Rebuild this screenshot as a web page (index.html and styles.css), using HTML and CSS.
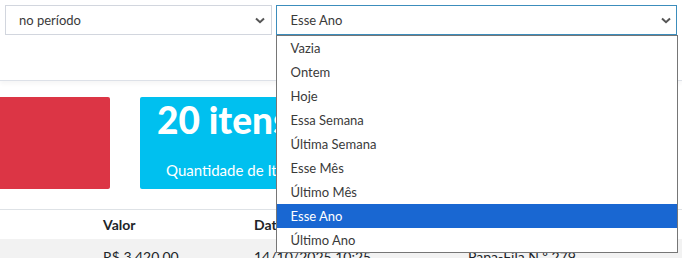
FILE: index.html
```html
<!DOCTYPE html>
<html lang="pt-BR">
<head>
  <meta charset="UTF-8" />
  <title>Relatório</title>
  <link rel="stylesheet" href="styles.css">
</head>
<body>
  <!-- Filtros -->
  <div class="filter-bar">
    <div class="select select-period">
      <span>no período</span>
      <svg class="chevron" width="10" height="7" viewBox="0 0 10 7"><path d="M1 1.5 L5 5.2 L9 1.5" fill="none" stroke="#555" stroke-width="2"/></svg>
    </div>
    <div class="select select-range is-open">
      <span>Esse Ano</span>
      <svg class="chevron" width="10" height="7" viewBox="0 0 10 7"><path d="M1 1.5 L5 5.2 L9 1.5" fill="none" stroke="#555" stroke-width="2"/></svg>
      <ul class="options">
        <li>Vazia</li>
        <li>Ontem</li>
        <li>Hoje</li>
        <li>Essa Semana</li>
        <li>Última Semana</li>
        <li>Esse Mês</li>
        <li>Último Mês</li>
        <li class="selected">Esse Ano</li>
        <li>Último Ano</li>
      </ul>
    </div>
  </div>

  <!-- Resumo -->
  <div class="boxes">
    <div class="small-box bg-danger"></div>
    <div class="small-box bg-info">
      <h3>20 itens</h3>
      <p>Quantidade de Itens</p>
    </div>
  </div>

  <!-- Tabela -->
  <div class="table">
    <div class="row head">
      <div></div>
      <div>Valor</div>
      <div>Data</div>
      <div>Local</div>
    </div>
    <div class="row striped">
      <div></div>
      <div>R$ 3.420,00</div>
      <div>14/10/2025 10:25</div>
      <div>Papa-Fila N.º 279</div>
    </div>
  </div>
</body>
</html>
```

FILE: styles.css
```css
html, body {
  margin: 0;
  padding: 0;
  background: #fff;
  font-family: 'Lato', 'Open Sans', sans-serif;
  color: #333;
  overflow: hidden;
}

.filter-bar {
  display: flex;
  gap: 4px;
  padding: 5px 5px 0 5px;
  height: 75px;
  border-bottom: 1px solid #dde1e8;
  box-shadow: 0 3px 4px rgba(0, 0, 0, 0.04);
}

.select {
  position: relative;
  box-sizing: border-box;
  height: 30px;
  border: 1px solid #d2d6de;
  display: flex;
  align-items: center;
  justify-content: space-between;
  padding: 0 5px 0 13px;
  font-size: 13px;
  color: #3a3a3a;
}

.select-period {
  width: 267px;
  padding-right: 6px;
}

.select-range {
  width: 402px;
  padding-left: 14px;
  border-color: #3c8dbc;
  padding-right: 5px;
}

.chevron {
  display: block;
}

.options {
  position: absolute;
  top: 29px;
  left: -1px;
  width: 402px;
  box-sizing: border-box;
  margin: 0;
  padding: 0;
  list-style: none;
  background: #fff;
  border: 1px solid #767676;
  z-index: 10;
}

.options li {
  box-sizing: border-box;
  height: 24px;
  padding: 1px 0 0 14px;
  line-height: 23px;
  font-size: 13px;
  color: #3a3a3a;
}

.options li.selected {
  background: #1967d2;
  color: #fff;
}

.boxes {
  display: flex;
  gap: 30px;
  margin-top: 16px;
}

.small-box {
  height: 92px;
  border-radius: 2px;
  box-sizing: border-box;
}

.bg-danger {
  width: 110px;
  background: #dc3545;
  border-radius: 0 2px 2px 0;
}

.bg-info {
  width: 330px;
  background: #00c0ef;
  color: #fff;
  padding: 0 0 0 17px;
}

.bg-info h3 {
  margin: 0;
  padding-top: 2px;
  font-size: 37px;
  font-weight: 900;
  line-height: 42px;
}

.bg-info p {
  margin: 20px 0 0 9px;
  font-size: 15px;
}

.table {
  margin-top: 20px;
  border-top: 1px solid #dee2e6;
}

.row {
  display: grid;
  grid-template-columns: 91px 151px 214px 1fr;
  font-size: 14px;
}

.row > div {
  padding-left: 12px;
}

.head {
  height: 29px;
  line-height: 29px;
  font-weight: 700;
  color: #212529;
}

.striped {
  background: #f2f2f2;
  padding-top: 8px;
  line-height: 20px;
  color: #212529;
}
```
